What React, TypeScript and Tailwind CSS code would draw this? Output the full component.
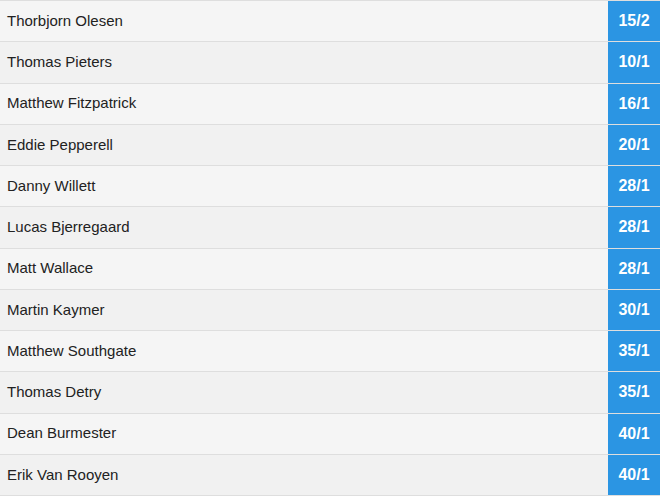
const runners = [
  { name: "Thorbjorn Olesen", odds: "15/2" },
  { name: "Thomas Pieters", odds: "10/1" },
  { name: "Matthew Fitzpatrick", odds: "16/1" },
  { name: "Eddie Pepperell", odds: "20/1" },
  { name: "Danny Willett", odds: "28/1" },
  { name: "Lucas Bjerregaard", odds: "28/1" },
  { name: "Matt Wallace", odds: "28/1" },
  { name: "Martin Kaymer", odds: "30/1" },
  { name: "Matthew Southgate", odds: "35/1" },
  { name: "Thomas Detry", odds: "35/1" },
  { name: "Dean Burmester", odds: "40/1" },
  { name: "Erik Van Rooyen", odds: "40/1" },
];

const App = () => {
  return (
    <div className="w-[660px] border-b border-[#dedede] font-['Liberation_Sans',Arial,sans-serif]">
      {runners.map((r, i) => (
        <div
          key={r.name}
          className={`flex h-[41.25px] border-t border-[#dedede] ${
            i % 2 === 0 ? "bg-[#f5f5f5]" : "bg-[#f1f1f1]"
          }`}
        >
          <div className="flex flex-1 items-center pl-[7px] text-[15px] text-[#222]">
            {r.name}
          </div>
          <div className="flex w-[52px] items-center justify-center bg-[#2b95e3] text-[16px] font-bold text-white">
            {r.odds}
          </div>
        </div>
      ))}
    </div>
  );
};

export default App;
